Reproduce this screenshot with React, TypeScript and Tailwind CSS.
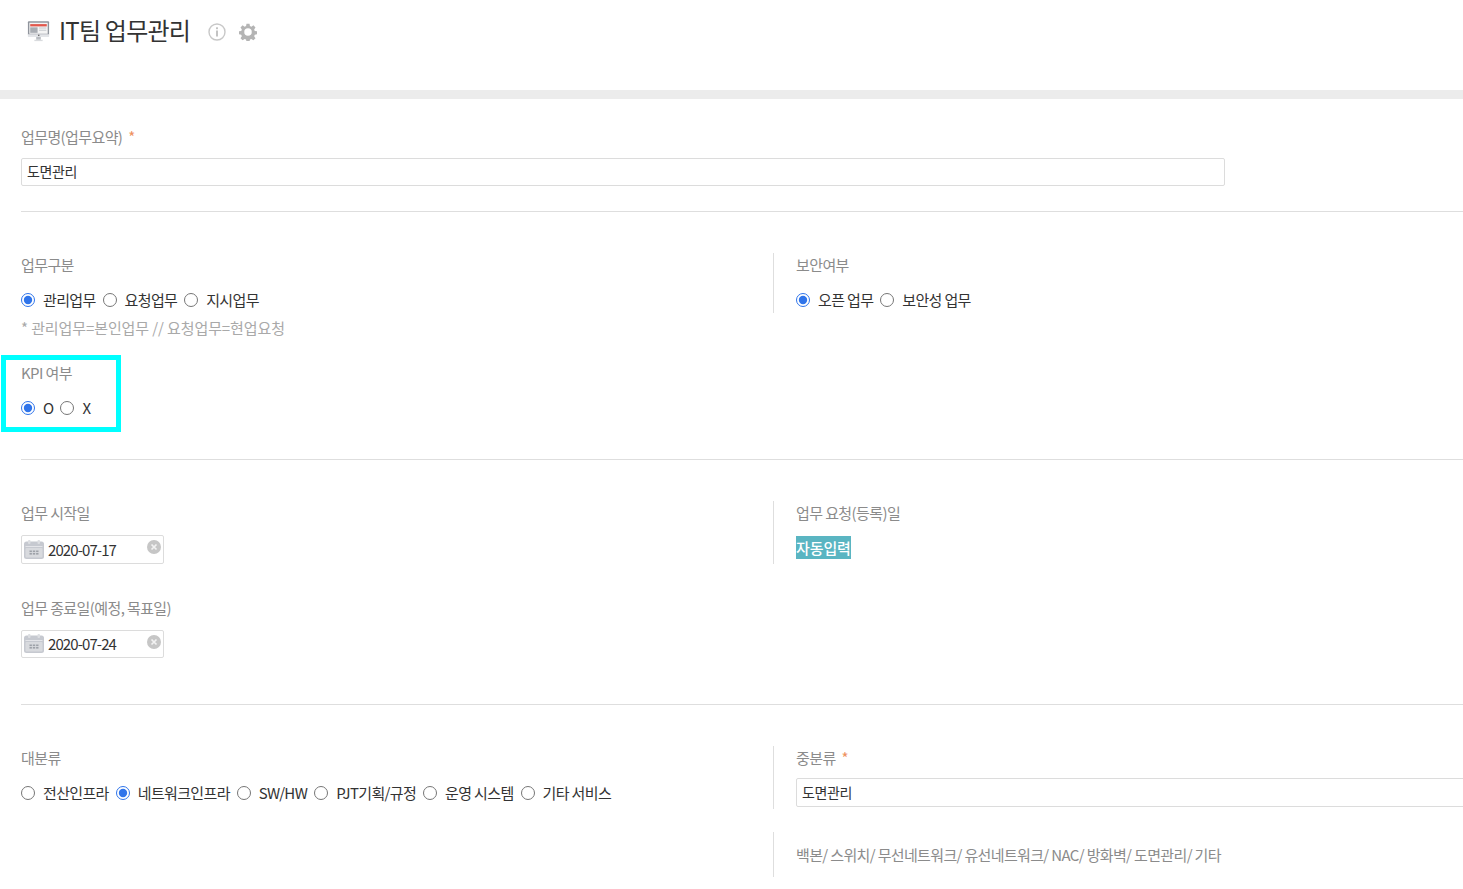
import React from "react";

function Radio({ label, checked, name }: { label: string; checked?: boolean; name: string }) {
  return (
    <label className="flex items-center h-5 mr-[7px]">
      <input type="radio" name={name} defaultChecked={checked} className="w-[14px] h-[14px] m-0 mr-2 accent-[#2f74ea]" />
      <span className="text-[15px] leading-5 tracking-[-0.65px] text-[#333]">{label}</span>
    </label>
  );
}

function Label({ children, star }: { children: React.ReactNode; star?: boolean }) {
  return (
    <div className="h-5 text-[15px] leading-5 tracking-[-0.6px] text-[#8b8b8b] whitespace-nowrap">
      {children}
      {star && <span className="text-[#ee9160] ml-[6px]">*</span>}
    </div>
  );
}

function Calendar() {
  return (
    <svg width="20" height="20" viewBox="0 0 20 20" className="shrink-0">
      <rect x="0" y="1.5" width="20" height="17.5" rx="2.5" fill="#c6c9d0" />
      <rect x="1.5" y="6" width="17" height="1" fill="#e4e5e9" />
      <rect x="1.5" y="8" width="17" height="9.5" rx="1" fill="#d8dade" />
      <rect x="4" y="0" width="2.5" height="4" rx="1" fill="#dcdee2" />
      <rect x="13.5" y="0" width="2.5" height="4" rx="1" fill="#dcdee2" />
      <g fill="#9da1a8">
        <rect x="5.5" y="10.5" width="2.4" height="1.6" />
        <rect x="8.8" y="10.5" width="2.4" height="1.6" />
        <rect x="12.1" y="10.5" width="2.4" height="1.6" />
        <rect x="5.5" y="13" width="2.4" height="1.6" />
        <rect x="8.8" y="13" width="2.4" height="1.6" />
        <rect x="12.1" y="13" width="2.4" height="1.6" />
      </g>
    </svg>
  );
}

function DateBox({ value, tall }: { value: string; tall?: boolean }) {
  return (
    <div className={`relative flex items-center w-[143px] border border-[#dcdcdc] rounded-[2px] pl-[2px] bg-white ${tall ? "h-[29px]" : "h-[28px]"}`}>
      <Calendar />
      <span className={`ml-[4px] text-[15px] tracking-[-0.9px] text-[#333] leading-5 ${tall ? "mt-[1px]" : "mt-0"}`}>{value}</span>
      <svg width="14" height="14" viewBox="0 0 14 14" className="absolute right-[2px] top-[4px]">
        <circle cx="7" cy="7" r="7" fill="#c6c6c6" />
        <path d="M4.5 4.5l5 5M9.5 4.5l-5 5" stroke="#f2f2f2" strokeWidth="1.7" />
      </svg>
    </div>
  );
}

function TextBox({ value, className }: { value: string; className: string }) {
  return (
    <div className={`flex items-center border border-[#dcdcdc] rounded-[2px] pl-[5px] text-[14px] tracking-[-0.4px] text-[#333] bg-white ${className}`}>
      {value}
    </div>
  );
}

export default function App() {
  return (
    <div className="w-full h-[889px] overflow-hidden bg-white" style={{ fontFamily: '"Noto Sans CJK KR", "Noto Sans", sans-serif' }}>
      <header className="h-[90px] flex items-start pl-[27px] pt-[12px]">
        <svg width="23" height="24" viewBox="0 0 25 25" className="mt-[7px] shrink-0">
          <rect x="1" y="2" width="23" height="16" rx="1" fill="#8f949c" />
          <rect x="2.5" y="3.5" width="20" height="12" fill="#f4f4f4" />
          <rect x="3.5" y="5" width="18" height="2.5" fill="#e2574c" />
          <rect x="3.5" y="8.5" width="8" height="6" fill="#a9adb3" />
          <rect x="13" y="8.5" width="8" height="1.5" fill="#d3d5d8" />
          <rect x="13" y="11" width="8" height="1.5" fill="#d3d5d8" />
          <rect x="1" y="16" width="23" height="3" fill="#e3e5e8" />
          <rect x="10" y="19" width="5" height="3" fill="#b9bcc1" />
          <rect x="8" y="22" width="9" height="1.5" fill="#d9dbde" />
          <rect x="12" y="16.5" width="1.5" height="1.5" fill="#666" />
        </svg>
        <h1 className="ml-[9px] text-[24px] leading-[36px] font-normal tracking-[-0.75px] text-[#333] whitespace-nowrap">IT팀 업무관리</h1>
        <svg width="18" height="18" viewBox="0 0 18 18" className="ml-[18px] mt-[11px] shrink-0">
          <circle cx="9" cy="9" r="8" fill="none" stroke="#c8c8c8" strokeWidth="1.4" />
          <rect x="8.1" y="7.5" width="1.8" height="6" fill="#bdbdbd" />
          <rect x="8.1" y="4.3" width="1.8" height="1.9" fill="#bdbdbd" />
        </svg>
        <svg width="18" height="18" viewBox="0 0 24 24" className="ml-[13px] mt-[11px] shrink-0">
          <path
            fill="#b4b4b4"
            fillRule="evenodd"
            d="M10 1h4l.6 3.1 1.9.8 2.7-1.8 2.8 2.8-1.8 2.7.8 1.9 3 .5v4l-3 .6-.8 1.9 1.8 2.7-2.8 2.8-2.7-1.8-1.9.8-.6 3h-4l-.6-3-1.9-.8-2.7 1.8-2.8-2.8 1.8-2.7-.8-1.9-3-.6v-4l3-.5.8-1.9-1.8-2.7 2.8-2.8 2.7 1.8 1.9-.8L10 1zm2 6a5 5 0 1 0 0 10 5 5 0 0 0 0-10z"
          />
        </svg>
      </header>
      <div className="h-[9px] bg-[#ececec]" />

      <main className="pl-[21px]">
        <section className="pt-[28px]">
          <Label star>업무명(업무요약)</Label>
          <TextBox value="도면관리" className="mt-[11px] w-[1204px] h-[28px] pb-[1px]" />
        </section>
        <hr className="mt-[25px] border-0 border-t border-[#dedede]" />

        <section className="flex items-start pt-[41px]">
          <div className="w-[752px] shrink-0">
            <div className="pt-[2px]">
              <Label>업무구분</Label>
            </div>
            <div className="flex mt-[15px]">
              <Radio name="a" label="관리업무" checked />
              <Radio name="a" label="요청업무" />
              <Radio name="a" label="지시업무" />
            </div>
            <div className="mt-[8px] h-5 text-[15px] leading-5 tracking-[-0.1px] text-[#a9a9a9]">* 관리업무=본인업무 // 요청업무=현업요청</div>
            <div className="relative mt-[25px]">
              <div className="absolute left-[-20px] top-[-8px] w-[120px] h-[77px] border-[5px] border-[#00ffff]" />
              <Label>KPI 여부</Label>
              <div className="flex mt-[15px]">
                <Radio name="k" label="O" checked />
                <Radio name="k" label="X" />
              </div>
            </div>
          </div>
          <div className="border-l border-[#dedede] h-[60px] pl-[22px] pt-[2px]">
            <Label>보안여부</Label>
            <div className="flex mt-[15px]">
              <Radio name="s" label="오픈 업무" checked />
              <Radio name="s" label="보안성 업무" />
            </div>
          </div>
        </section>
        <hr className="mt-[41px] border-0 border-t border-[#dedede]" />

        <section className="flex items-start pt-[41px]">
          <div className="w-[752px] shrink-0">
            <div className="pt-[2px]">
              <Label>업무 시작일</Label>
            </div>
            <div className="mt-[12px]">
              <DateBox value="2020-07-17" tall />
            </div>
            <div className="mt-[34px]">
              <Label>업무 종료일(예정, 목표일)</Label>
            </div>
            <div className="mt-[12px]">
              <DateBox value="2020-07-24" />
            </div>
          </div>
          <div className="border-l border-[#dedede] h-[63px] pl-[22px] pt-[2px]">
            <Label>업무 요청(등록)일</Label>
            <div className="mt-[13px] inline-block bg-[#5ab5c2] text-white text-[15px] leading-[23px] tracking-[-0.1px] font-medium">자동입력</div>
          </div>
        </section>
        <hr className="mt-[46px] border-0 border-t border-[#dedede]" />

        <section className="flex items-start pt-[41px]">
          <div className="w-[752px] shrink-0">
            <div className="pt-[2px]">
              <Label>대분류</Label>
            </div>
            <div className="flex mt-[15px]">
              <Radio name="c" label="전산인프라" />
              <Radio name="c" label="네트워크인프라" checked />
              <Radio name="c" label="SW/HW" />
              <Radio name="c" label="PJT기획/규정" />
              <Radio name="c" label="운영 시스템" />
              <Radio name="c" label="기타 서비스" />
            </div>
          </div>
          <div className="flex-1 min-w-0">
            <div className="border-l border-[#dedede] h-[63px] pl-[22px] pt-[2px]">
              <Label star>중분류</Label>
              <TextBox value="도면관리" className="mt-[10px] w-[800px] h-[29px]" />
            </div>
            <div className="mt-[23px] border-l border-[#dedede] h-[45px] pl-[22px] pt-[13px]">
              <div className="h-5 text-[15px] leading-5 tracking-[-0.65px] text-[#8b8b8b] whitespace-nowrap">백본/ 스위치/ 무선네트워크/ 유선네트워크/ NAC/ 방화벽/ 도면관리/ 기타</div>
            </div>
          </div>
        </section>
      </main>
    </div>
  );
}
